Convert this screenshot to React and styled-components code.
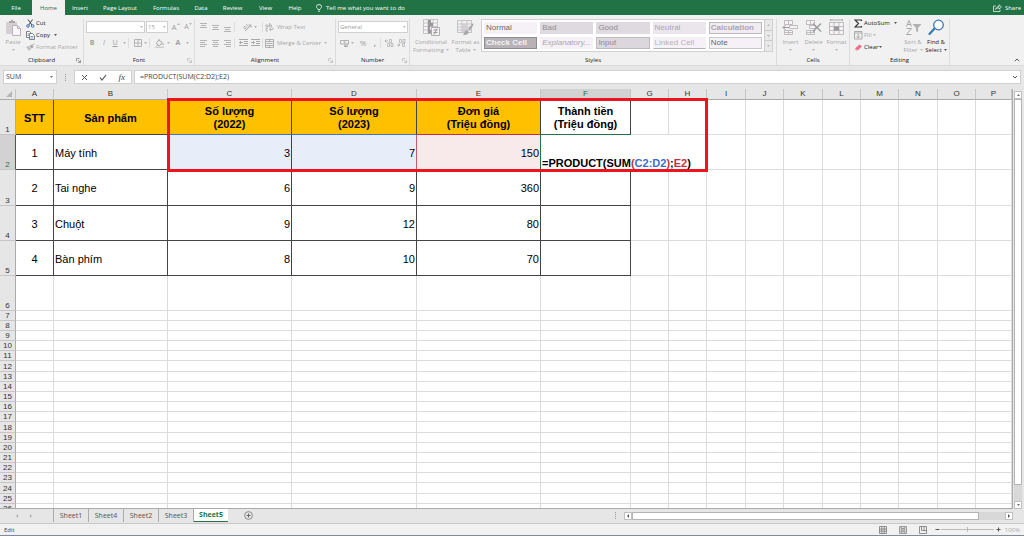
import React, { useState } from 'react';
import styled, { createGlobalStyle, css } from 'styled-components';

const menu = [
    { name: 'File', width: 32 },
    { name: 'Home', width: 33 },
    { name: 'Insert', width: 30 },
    { name: 'Page Layout', width: 50 },
    { name: 'Formulas', width: 42 },
    { name: 'Data', width: 28 },
    { name: 'Review', width: 35 },
    { name: 'View', width: 31 },
    { name: 'Help', width: 28 },
];

const cellStyles = [
    { name: 'Normal', kind: 'normal' },
    { name: 'Bad', kind: 'bad' },
    { name: 'Good', kind: 'bad' },
    { name: 'Neutral', kind: 'neutral' },
    { name: 'Calculation', kind: 'calc' },
    { name: 'Check Cell', kind: 'check' },
    { name: 'Explanatory...', kind: 'explain' },
    { name: 'Input', kind: 'input' },
    { name: 'Linked Cell', kind: 'linked' },
    { name: 'Note', kind: 'note' },
];

const columns = [
    ['A', 38], ['B', 114], ['C', 124], ['D', 125], ['E', 124], ['F', 90],
    ['G', 38], ['H', 38], ['I', 39], ['J', 38], ['K', 39], ['L', 38],
    ['M', 38], ['N', 39], ['O', 38], ['P', null],
];

const products = [
    { row: 2, stt: 1, name: 'Máy tính', y2022: 3, y2023: 7, price: 150 },
    { row: 3, stt: 2, name: 'Tai nghe', y2022: 6, y2023: 9, price: 360 },
    { row: 4, stt: 3, name: 'Chuột', y2022: 9, y2023: 12, price: 80 },
    { row: 5, stt: 4, name: 'Bàn phím', y2022: 8, y2023: 10, price: 70 },
];

const emptyRows = Array.from({ length: 21 }, (_, i) => i + 6);
const sheets = ['Sheet1', 'Sheet4', 'Sheet2', 'Sheet3', 'Sheet5'];

const rowHeight = (n) => {
    if (n === 3) return 36;
    if (n <= 6) return 35;
    return n % 6 === 0 ? 11 : 10;
};

const Caret = ({ up }) => (
    <CaretSvg viewBox="0 0 4 2"><path d={up ? 'M0 2L2 0L4 2Z' : 'M0 0L2 2L4 0Z'} fill="currentColor" /></CaretSvg>
);

const AlignIcon = ({ lines, top = 1 }) => (
    <Icon $w={9} $h={9} viewBox="0 0 9 9">
        {lines.map(([x, w], i) => <rect key={i} x={x} y={top + i * 2} width={w} height="1" fill="#b4b4b4" />)}
    </Icon>
);

function Clipboard() {
    return (
        <Group $w={84}>
            <Body>
                <BigButton $w={22}>
                    <Icon $w={17} $h={17} viewBox="0 0 17 17">
                        <path d="M1 3h11v12H1z" fill="#d3cfd3" />
                        <path d="M4 2h2l.5-1.500h1L8 2h2v2H4z" fill="#a9a5a9" />
                        <path d="M7.500 6.500h5l3 3v7h-8z" fill="#fbf6fb" stroke="#b8b4b8" />
                        <path d="M12.500 6.500v3h3" fill="none" stroke="#b8b4b8" />
                    </Icon>
                    <span>Paste</span>
                    <Caret />
                </BigButton>
                <Stack>
                    <SmallButton $on>
                        <Icon $w={9} $h={9} viewBox="0 0 9 9">
                            <path d="M2 .5L6 6M6.500 .5L2.800 6" stroke="#444" fill="none" />
                            <circle cx="2" cy="7" r="1.300" fill="none" stroke="#3c78b4" />
                            <circle cx="6.700" cy="7" r="1.300" fill="none" stroke="#3c78b4" />
                        </Icon>
                        Cut
                    </SmallButton>
                    <SmallButton $on>
                        <Icon $w={9} $h={9} viewBox="0 0 9 9">
                            <path d="M.5 .5h3l1.500 1.500v4.500H.5z" fill="#fff" stroke="#666" strokeWidth=".8" />
                            <path d="M3.500 2.500h3L8.500 4.500v4h-5z" fill="#fff" stroke="#666" strokeWidth=".8" />
                            <path d="M4.500 5.500h3M4.500 7h3M1.500 3h1.500M1.500 4.500h1.500" stroke="#3c78b4" strokeWidth=".7" />
                        </Icon>
                        Copy <Gap /><Caret />
                    </SmallButton>
                    <SmallButton>
                        <Icon $w={9} $h={9} viewBox="0 0 9 9">
                            <path d="M0 4l3-1 2.500 2.500L3 8z" fill="#c4c0c4" />
                            <path d="M4 3l1.500-1L7 3.500 6 5zM6 2.500L8.500 .5" stroke="#aaa" fill="#aaa" />
                        </Icon>
                        Format Painter
                    </SmallButton>
                </Stack>
            </Body>
            <Foot>Clipboard<Launcher on /></Foot>
        </Group>
    );
}

function Launcher({ on }) {
    return (
        <LaunchButton aria-label="More options" $on={on}>
            <Icon $w={5} $h={5} viewBox="0 0 5 5">
                <path d="M.5 3.500v-3h3M2 2l2.500 2.500M4.500 2v2.500H2" fill="none" stroke="currentColor" strokeWidth=".7" />
            </Icon>
        </LaunchButton>
    );
}

function FontGroup() {
    return (
        <Group $w={111}>
            <Body $rows>
                <Tools>
                    <Combo $w={59}><input aria-label="Font" defaultValue="" /><Caret /></Combo>
                    <Combo $w={22}><input aria-label="Font size" defaultValue="15" /><Caret /></Combo>
                    <Tool $w={13} $size={8}>A<Raise><Caret up /></Raise></Tool>
                    <Tool $w={12} $size={7}>A<Raise><Caret /></Raise></Tool>
                </Tools>
                <Tools>
                    <Tool $w={12}><b>B</b></Tool>
                    <Tool $w={12}><i>I</i></Tool>
                    <Tool $w={10}><u>U</u></Tool>
                    <Tool $w={8}><Caret /></Tool>
                    <Split />
                    <Tool $w={18}>
                        <Icon $w={8} $h={8} viewBox="0 0 8 8"><path d="M.5 .5h7v7h-7zM4 .5v7M.5 4h7" fill="none" stroke="#b5b5b5" /></Icon>
                        <Caret />
                    </Tool>
                    <Split />
                    <Tool $w={21}>
                        <Icon $w={10} $h={9} viewBox="0 0 10 9">
                            <path d="M1.500 3.500L4 1l3.500 3-3 2.500h-2zM4 1V0" fill="#eee" stroke="#a8a8a8" />
                            <path d="M8 4l1.200 2H7.500z" fill="#a8a8a8" /><path d="M0 7.500h9v1.500H0z" fill="#d0cdd0" />
                        </Icon>
                        <Caret />
                    </Tool>
                    <Tool $w={19}><b>A</b><Gap /><Caret /></Tool>
                </Tools>
            </Body>
            <Foot>Font<Launcher /></Foot>
        </Group>
    );
}

function Alignment() {
    return (
        <Group $w={141}>
            <Body $rows>
                <Tools>
                    <Tool $w={12}><AlignIcon top={0} lines={[[1, 7], [2, 5], [1, 7]]} /></Tool>
                    <Tool $w={12}><AlignIcon top={2} lines={[[1, 7], [2, 5], [1, 7]]} /></Tool>
                    <Tool $w={13}><AlignIcon top={4} lines={[[1, 7], [2, 5], [1, 7]]} /></Tool>
                    <Split />
                    <Tool $w={25}>
                        <Icon $w={9} $h={9} viewBox="0 0 9 9">
                            <path d="M2 8L8 2M8 2H5.500M8 2v2.500" fill="none" stroke="#a8a8a8" />
                            <circle cx="2" cy="4.500" r="1.200" fill="none" stroke="#a8a8a8" strokeWidth=".8" />
                            <path d="M3.200 1l2 2.500" stroke="#a8a8a8" strokeWidth=".8" />
                        </Icon>
                        <Caret />
                    </Tool>
                    <Split />
                    <SmallButton $gap={3}>
                        <Icon $w={9} $h={9} viewBox="0 0 9 9">
                            <path d="M4.500 0v4M1 2h2v2H1zM4.500 2h2v2h-2M3 5.500H1v2.500h2M4.500 6.500H8V4.500M6 5L4.500 6.500 6 8" fill="none" stroke="#a8a8a8" strokeWidth=".8" />
                        </Icon>
                        Wrap Text
                    </SmallButton>
                </Tools>
                <Tools>
                    <Tool $w={12}><AlignIcon lines={[[1, 7], [1, 5], [1, 7], [1, 5]]} /></Tool>
                    <Tool $w={12}><AlignIcon lines={[[1, 7], [2, 5], [1, 7], [2, 5]]} /></Tool>
                    <Tool $w={13}><AlignIcon lines={[[1, 7], [3, 5], [1, 7], [3, 5]]} /></Tool>
                    <Split />
                    <Tool $w={12}>
                        <Icon $w={9} $h={8} viewBox="0 0 9 8"><path d="M0 .5h9M5 2.500h4M5 4.500h4M0 6.500h9M4 3.500H.5M2 2L.5 3.500 2 5" fill="none" stroke="#a8a8a8" /></Icon>
                    </Tool>
                    <Tool $w={13}>
                        <Icon $w={9} $h={8} viewBox="0 0 9 8"><path d="M0 .5h9M5 2.500h4M5 4.500h4M0 6.500h9M0 3.500h3.500M2 2l1.500 1.500L2 5" fill="none" stroke="#a8a8a8" /></Icon>
                    </Tool>
                    <Split />
                    <SmallButton $gap={3}>
                        <Icon $w={9} $h={9} viewBox="0 0 9 9">
                            <path d="M.5 .5h8v8h-8zM.5 2.500h8M.5 6.500h8M4.500 .5v2M4.500 6.500v2M1.500 4.500h6" fill="none" stroke="#aaa" strokeWidth=".9" />
                        </Icon>
                        Merge &amp; Center <Caret />
                    </SmallButton>
                </Tools>
            </Body>
            <Foot>Alignment<Launcher /></Foot>
        </Group>
    );
}

function NumberGroup() {
    return (
        <Group $w={74}>
            <Body $rows>
                <Tools>
                    <Combo $w={70}><input aria-label="Number format" defaultValue="General" /><Caret /></Combo>
                </Tools>
                <Tools>
                    <Tool $w={18}>
                        <Icon $w={9} $h={9} viewBox="0 0 9 9">
                            <path d="M.5 1.500h8v3.500h-8z" fill="none" stroke="#b0b0b0" /><circle cx="4.500" cy="3.200" r="1" fill="#b0b0b0" />
                            <path d="M4 6h4M4 7.500h4" stroke="#a8a8a8" />
                        </Icon>
                        <Caret />
                    </Tool>
                    <Tool $w={14} $size={8}>%</Tool>
                    <Tool $w={10} $size={8}><b>,</b></Tool>
                    <Gap />
                    <Split />
                    <Tool $w={12}>
                        <Icon $w={9} $h={8} viewBox="0 0 9 8"><path d="M0 2h3M1.500 .5L0 2l1.500 1.500" fill="none" stroke="#a8a8a8" strokeWidth=".8" /><path d="M4.500 3.500v-3h2v3zM2.500 7.500v-3h2v3zM6 7.500v-3h2v3z" fill="none" stroke="#aaa" strokeWidth=".7" /></Icon>
                    </Tool>
                    <Tool $w={12}>
                        <Icon $w={9} $h={8} viewBox="0 0 9 8"><path d="M0 6h3M1.500 4.500L3 6 1.500 7.500" fill="none" stroke="#a8a8a8" strokeWidth=".8" /><path d="M2.500 3.500v-3h2v3zM6 3.500v-3h2v3zM5.500 7.500v-3h2v3z" fill="none" stroke="#aaa" strokeWidth=".7" /></Icon>
                    </Tool>
                </Tools>
            </Body>
            <Foot>Number<Launcher /></Foot>
        </Group>
    );
}

function Styles() {
    return (
        <Group $w={367}>
            <Body>
                <BigButton $w={38}>
                    <Icon $w={17} $h={17} viewBox="0 0 17 17">
                        <path d="M.5 .5h14v14H.5zM.5 4h14M.5 7.500h14M.5 11h14M5 .5v14M10 .5v14" fill="#f6f2f6" stroke="#c4c4c4" />
                        <path d="M5 1h3v3H5zM5 4h5v3.500H5zM5 7.500h2v3.500H5zM5 11h4v3.500H5z" fill="#999" />
                        <path d="M8.500 8.500h8v8h-8z" fill="#f4f1f4" stroke="#b0b0b0" />
                        <path d="M10.500 11h4M10.500 13.500h4M14 9.500l-3 6" stroke="#999" fill="none" />
                    </Icon>
                    <span>Conditional</span>
                    <Row>Formatting <Caret /></Row>
                </BigButton>
                <BigButton $w={31}>
                    <Icon $w={17} $h={17} viewBox="0 0 17 17">
                        <path d="M.5 1.500h14v12H.5zM.5 5h14M.5 8h14M.5 11h14M5 1.500v12M10 1.500v12" fill="#f4f0f4" stroke="#c4c4c4" />
                        <path d="M5 5h5v8H5z" fill="#d2ced2" />
                        <path d="M16 4l-5 6 1.500 1.500L16.500 6zM6 16c1-1 1-4 4-5l2 2c-1 3-4 3-6 3z" fill="#a8a8a8" />
                    </Icon>
                    <span>Format as</span>
                    <Row>Table <Caret /></Row>
                </BigButton>
                <Gallery>
                    <GalleryGrid>
                        {cellStyles.map((s) => <StyleTile key={s.name} $kind={s.kind}>{s.name}</StyleTile>)}
                    </GalleryGrid>
                    <GalleryScroll>
                        <button aria-label="Previous styles"><Caret up /></button>
                        <button aria-label="Next styles"><Caret /></button>
                        <button aria-label="More styles"><Caret /></button>
                    </GalleryScroll>
                </Gallery>
            </Body>
            <Foot>Styles</Foot>
        </Group>
    );
}

function Cells() {
    return (
        <Group $w={73}>
            <Body>
                <BigButton $w={23}>
                    <Icon $w={17} $h={17} viewBox="0 0 17 17">
                        <path d="M2.500 1.500h8v4h-8zM6.500 1.500v4M2.500 11.500h8v4h-8zM6.500 11.500v4M2.500 13.500h8M7.500 6.500h8v3h-8z" fill="#f6f2f6" stroke="#bfbcbf" />
                        <path d="M7 8.500H1M3.500 6L1 8.500 3.500 11" fill="none" stroke="#999" />
                    </Icon>
                    <span>Insert</span>
                    <Caret />
                </BigButton>
                <BigButton $w={23}>
                    <Icon $w={17} $h={17} viewBox="0 0 17 17">
                        <path d="M1.500 1.500h8v4h-8zM5.500 1.500v4M1.500 11.500h8v4h-8zM5.500 11.500v4M1.500 13.500h8M4.500 6.500h6v3h-6z" fill="#f6f2f6" stroke="#bfbcbf" />
                        <path d="M8 4.500l8 8M16 4.500l-8 8" fill="none" stroke="#999" strokeWidth="1.300" />
                    </Icon>
                    <span>Delete</span>
                    <Caret />
                </BigButton>
                <BigButton $w={23}>
                    <Icon $w={17} $h={17} viewBox="0 0 17 17">
                        <path d="M1.500 3.500h14v12h-14zM1.500 7.500h14M1.500 11.500h14M6 3.500v12M11 3.500v12" fill="#f6f2f6" stroke="#bfbcbf" />
                        <path d="M6 7.500h5v4H6z" fill="#999" />
                        <path d="M2.500 0v2M14.500 0v2M2.500 1h12" stroke="#aaa" />
                    </Icon>
                    <span>Format</span>
                    <Caret />
                </BigButton>
            </Body>
            <Foot>Cells</Foot>
        </Group>
    );
}

function Editing() {
    return (
        <Group $w={100}>
            <Body>
                <Stack>
                    <SmallButton $on>
                        <Icon $w={9} $h={9} viewBox="0 0 9 9"><path d="M7.500 2V1H1l3.500 3.500L1 8h6.500V7" fill="none" stroke="#333" strokeWidth="1.200" /></Icon>
                        AutoSum <Gap /><Caret />
                    </SmallButton>
                    <SmallButton>
                        <Icon $w={9} $h={9} viewBox="0 0 9 9"><path d="M.5 .5h7.500v7.500H.5zM.5 2h7.500M4.200 3v4M2.500 5.300L4.200 7 6 5.300" fill="none" stroke="#aaa" /></Icon>
                        Fill <Caret />
                    </SmallButton>
                    <SmallButton $on>
                        <Icon $w={9} $h={9} viewBox="0 0 9 9"><path d="M1 5.500L5.500 1.500 8 3.500 3.500 7.500z" fill="#e8708a" /><path d="M1 5.500l2.500 2L2.500 8 .5 6.500z" fill="#f4b8c4" /></Icon>
                        Clear <Caret />
                    </SmallButton>
                </Stack>
                <BigButton $w={24}>
                    <Icon $w={17} $h={17} viewBox="0 0 17 17">
                        <path d="M1.500 7.500L4 1.500l2.500 6M2.300 5.500h3.400M1.500 9.500h5l-5 6h5" fill="none" stroke="#a9a6a9" />
                        <path d="M7.500 5h9l-3.500 4v4.500l-2-1.500V9z" fill="#b4b1b4" />
                    </Icon>
                    <span>Sort &amp;</span>
                    <Row>Filter <Caret /></Row>
                </BigButton>
                <BigButton $w={22} $on>
                    <Icon $w={17} $h={17} viewBox="0 0 17 17">
                        <path d="M6.500 9.500L1.500 15" stroke="#3b77b5" strokeWidth="2.200" strokeLinecap="round" />
                        <circle cx="10.500" cy="6" r="4.800" fill="#fff" stroke="#3b77b5" strokeWidth="1.300" />
                    </Icon>
                    <span>Find &amp;</span>
                    <Row>Select <Caret /></Row>
                </BigButton>
            </Body>
            <Foot>Editing</Foot>
        </Group>
    );
}

function Sheet() {
    return (
        <Table>
            <colgroup>
                <Col $w={16} />
                {columns.map(([name, width]) => <Col key={name} $w={width} />)}
            </colgroup>
            <thead>
                <Line $h={11}>
                    <Corner aria-label="Select all">
                        <Icon $w={6} $h={6} viewBox="0 0 6 6"><path d="M6 0v6H0z" fill="#b4b4b4" /></Icon>
                    </Corner>
                    {columns.map(([name]) => <ColHead key={name} scope="col" $active={name === 'F'}>{name}</ColHead>)}
                </Line>
            </thead>
            <tbody>
                <Line $h={rowHeight(1)}>
                    <RowHead scope="row">1</RowHead>
                    <Title $gold>STT</Title>
                    <Title $gold>Sản phẩm</Title>
                    <Title $gold $edge="#4472c4">Số lượng<br />(2022)</Title>
                    <Title $gold $edge="#4472c4">Số lượng<br />(2023)</Title>
                    <Title $gold $edge="#c4303c">Đơn giá<br />(Triệu đồng)</Title>
                    <Title $edge="#217346">Thành tiền<br />(Triệu đồng)</Title>
                    {columns.slice(6).map(([name]) => <Cell key={name} />)}
                </Line>
                {products.map((p) => (
                    <Line key={p.row} $h={rowHeight(p.row)}>
                        <RowHead scope="row" $active={p.row === 2}>{p.row}</RowHead>
                        <Cell $boxed $align="center">{p.stt}</Cell>
                        <Cell $boxed $align="left">{p.name}</Cell>
                        <Cell $boxed $fill={p.row === 2 && '#e8eef9'}>{p.y2022}</Cell>
                        <Cell $boxed $fill={p.row === 2 && '#e8eef9'} $side={p.row === 2 && '#c4606a'}>{p.y2023}</Cell>
                        <Cell $boxed $fill={p.row === 2 && '#f8e9ea'} $side={p.row === 2 && '#217346'}>{p.price}</Cell>
                        {p.row === 2 ? (
                            <Editor colSpan={3}>
                                =PRODUCT(SUM<Ref $color="#c4303c">(</Ref><Ref $color="#3a6fc8">C2:D2</Ref><Ref $color="#c4303c">)</Ref>;<Ref $color="#c4303c">E2</Ref>)
                            </Editor>
                        ) : <Cell $boxed />}
                        {columns.slice(p.row === 2 ? 8 : 6).map(([name]) => <Cell key={name} />)}
                    </Line>
                ))}
                {emptyRows.map((n) => (
                    <Line key={n} $h={rowHeight(n)}>
                        <RowHead scope="row">{n}</RowHead>
                        {columns.map(([name]) => <Cell key={name} />)}
                    </Line>
                ))}
            </tbody>
        </Table>
    );
}

function App() {
    const [tab, setTab] = useState('Home');
    const [sheet, setSheet] = useState('Sheet5');
    const [formula, setFormula] = useState('=PRODUCT(SUM(C2:D2);E2)');
    return (
        <Window>
            <Global />
            <Menu>
                {menu.map((m) => (
                    <MenuTab key={m.name} $w={m.width} $active={m.name === tab} onClick={() => setTab(m.name)}>{m.name}</MenuTab>
                ))}
                <TellMe>
                    <Icon $w={6} $h={8} viewBox="0 0 6 8"><path d="M2 5.500C2 4.500 .5 4 .5 2.500a2.500 2 0 0 1 5 0C5.500 4 4 4.500 4 5.500zM2 7.200h2" fill="none" stroke="#fff" strokeWidth=".8" /></Icon>
                    Tell me what you want to do
                </TellMe>
                <Share>
                    <Icon $w={9} $h={8} viewBox="0 0 9 8"><path d="M3 2H.5v5.500h6.500V5.500M2.500 5.500C3 3.500 4.500 2.500 6 2.500V.8L8.500 3 6 5V3.800C4.500 3.800 3.500 4.300 2.500 5.500z" fill="none" stroke="#fff" strokeWidth=".7" /></Icon>
                    Share
                </Share>
            </Menu>
            <Ribbon>
                <Clipboard />
                <FontGroup />
                <Alignment />
                <NumberGroup />
                <Styles />
                <Cells />
                <Editing />
                <Collapse aria-label="Collapse the ribbon">
                    <Icon $w={6} $h={4} viewBox="0 0 6 4"><path d="M.8 3.200L3 1l2.200 2.200" fill="none" stroke="#555" /></Icon>
                </Collapse>
            </Ribbon>
            <FormulaBar>
                <NameBox><input aria-label="Name box" defaultValue="SUM" /><Caret /></NameBox>
                <Dots />
                <FormulaButtons>
                    <button aria-label="Cancel"><Icon $w={7} $h={7} viewBox="0 0 7 7"><path d="M1 1l5 5M6 1L1 6" stroke="#555" /></Icon></button>
                    <button aria-label="Enter"><Icon $w={8} $h={7} viewBox="0 0 8 7"><path d="M1 3.500L3 6l4-5" fill="none" stroke="#555" strokeWidth="1.200" /></Icon></button>
                    <button aria-label="Insert function"><Fx>fx</Fx></button>
                </FormulaButtons>
                <FormulaField>
                    <input aria-label="Formula" value={formula} onChange={(e) => setFormula(e.target.value)} />
                    <Icon $w={6} $h={4} viewBox="0 0 6 4"><path d="M1 1l2 2 2-2" fill="none" stroke="#555" /></Icon>
                </FormulaField>
            </FormulaBar>
            <Work>
                <Grid>
                    <Sheet />
                    <Highlight />
                </Grid>
                <VScroll>
                    <ScrollButton aria-label="Scroll up"><Caret up /></ScrollButton>
                    <VTrack><Thumb $size={96} /></VTrack>
                    <ScrollButton aria-label="Scroll down"><Caret /></ScrollButton>
                </VScroll>
            </Work>
            <SheetBar>
                <SheetNav>
                    <button aria-label="Previous sheet"><Icon $w={3} $h={4} viewBox="0 0 3 4"><path d="M3 0v4L1 2z" fill="#b0b0b0" /></Icon></button>
                    <button aria-label="Next sheet"><Icon $w={3} $h={4} viewBox="0 0 3 4"><path d="M0 0v4l2-2z" fill="#b0b0b0" /></Icon></button>
                </SheetNav>
                {sheets.map((s) => (
                    <SheetTab key={s} $active={s === sheet} onClick={() => setSheet(s)}>{s}</SheetTab>
                ))}
                <AddSheet aria-label="New sheet">
                    <Icon $w={9} $h={9} viewBox="0 0 9 9"><circle cx="4.500" cy="4.500" r="3.900" fill="none" stroke="#777" strokeWidth=".8" /><path d="M4.500 2.500v4M2.500 4.500h4" stroke="#666" /></Icon>
                </AddSheet>
                <Dots />
                <HScroll>
                    <ScrollButton aria-label="Scroll left"><Icon $w={2} $h={4} viewBox="0 0 2 4"><path d="M2 0v4L0 2z" fill="#555" /></Icon></ScrollButton>
                    <Track><Thumb $size={93} /></Track>
                    <ScrollButton aria-label="Scroll right"><Icon $w={2} $h={4} viewBox="0 0 2 4"><path d="M0 0v4l2-2z" fill="#555" /></Icon></ScrollButton>
                </HScroll>
            </SheetBar>
            <Status>
                <Mode>Edit</Mode>
                <ViewButton aria-label="Normal view"><Icon $w={8} $h={8} viewBox="0 0 8 8"><path d="M.5 .5h7v7h-7zM.5 3h7M.5 5.200h7M2.800 .5v7M5.200 .5v7" fill="none" stroke="#777" strokeWidth=".8" /></Icon></ViewButton>
                <ViewButton aria-label="Page layout view"><Icon $w={8} $h={8} viewBox="0 0 8 8"><path d="M.5 .5h7v7h-7zM2.300 1v6.500M5.700 1v6.500M3 2.500h2M3 4h2M3 5.500h2" fill="#ddd" stroke="#888" strokeWidth=".8" /></Icon></ViewButton>
                <ViewButton aria-label="Page break preview"><Icon $w={8} $h={8} viewBox="0 0 8 8"><path d="M.5 .5h7v7h-7zM2.500 .5v4h5M5 .5v4" fill="none" stroke="#777" strokeWidth=".8" /></Icon></ViewButton>
                <ZoomButton aria-label="Zoom out"><Icon $w={5} $h={5} viewBox="0 0 5 5"><path d="M.5 2.500h4" stroke="#555" /></Icon></ZoomButton>
                <ZoomRange type="range" aria-label="Zoom" defaultValue="50" />
                <ZoomButton aria-label="Zoom in"><Icon $w={5} $h={5} viewBox="0 0 5 5"><path d="M.5 2.500h4M2.500 .5v4" stroke="#555" /></Icon></ZoomButton>
                <Percent>100%</Percent>
            </Status>
        </Window>
    );
}

const Global = createGlobalStyle`
    * {
        box-sizing: border-box;
    }
    body {
        margin: 0;
    }
    button, input {
        font: inherit;
        color: inherit;
        padding: 0;
        margin: 0;
        border: 0;
        background: none;
        min-width: 0;
        outline: none;
    }
    button {
        display: flex;
        align-items: center;
        justify-content: center;
        white-space: nowrap;
    }
`;
const Window = styled.div`
    display: flex;
    flex-direction: column;
    height: 100vh;
    overflow: hidden;
    background: #e6e6e6;
    color: #444;
    font-family: "Open Sans", "Noto Sans", sans-serif;
    font-size: 6px;
    line-height: 8px;
`;
const Icon = styled.svg`
    display: block;
    flex: none;
    width: ${p => p.$w}px;
    height: ${p => p.$h}px;
`;
const CaretSvg = styled.svg`
    display: block;
    flex: none;
    width: 3px;
    height: 2px;
`;
const Gap = styled.span`
    width: 2px;
`;
const Row = styled.span`
    display: flex;
    align-items: center;
    gap: 2px;
`;
const Menu = styled.nav`
    display: flex;
    flex: none;
    height: 15px;
    padding-right: 3px;
    background: #217346;
    color: #fff;
`;
const MenuTab = styled.button`
    width: ${p => p.$w}px;
    ${p => p.$active && css`
        background: #f1f1f1;
        color: #217346;
    `}
`;
const TellMe = styled.button`
    gap: 4px;
    margin: 0 auto 0 7px;
`;
const Share = styled.button`
    gap: 3px;
`;
const Ribbon = styled.div`
    display: flex;
    flex: none;
    height: 51px;
    padding: 4px 0 0;
    background: #f1f1f1;
    border-bottom: 1px solid #dadada;
`;
const Group = styled.section`
    display: flex;
    flex-direction: column;
    flex: none;
    width: ${p => p.$w}px;
    border-right: 1px solid #dcdcdc;
`;
const Body = styled.div`
    display: flex;
    flex: 1;
    padding: 0 2px;
    ${p => p.$rows && css`
        flex-direction: column;
        gap: 4px;
        padding-top: 2px;
    `}
`;
const Foot = styled.div`
    display: flex;
    align-items: center;
    justify-content: center;
    position: relative;
    height: 10px;
    color: #222;
`;
const LaunchButton = styled.button`
    position: absolute;
    right: 2px;
    bottom: 2px;
    color: ${p => p.$on ? '#777' : '#b8b8b8'};
`;
const BigButton = styled.button`
    flex-direction: column;
    justify-content: flex-start;
    flex: none;
    width: ${p => p.$w}px;
    color: ${p => p.$on ? '#222' : '#a8a5a8'};
    & > svg + span {
        margin-top: 2px;
    }
    & > span + svg {
        margin-top: 3px;
    }
`;
const Stack = styled.div`
    display: flex;
    flex-direction: column;
    gap: 4px;
    flex: 1;
    padding-left: 2px;
`;
const SmallButton = styled.button`
    justify-content: flex-start;
    gap: ${p => p.$gap || 1}px;
    height: 8px;
    color: ${p => p.$on ? '#222' : '#a8a5a8'};
`;
const Tools = styled.div`
    display: flex;
    align-items: center;
    height: 12px;
    color: #a0a0a0;
`;
const Tool = styled.button`
    gap: 2px;
    flex: none;
    width: ${p => p.$w}px;
    height: 12px;
    font-size: ${p => p.$size || 7}px;
`;
const Raise = styled.span`
    align-self: flex-start;
    margin-left: -2px;
    padding-top: 2px;
`;
const Split = styled.span`
    flex: none;
    width: 1px;
    height: 10px;
    margin-right: 2px;
    background: #dedede;
`;
const Combo = styled.label`
    display: flex;
    align-items: center;
    flex: none;
    width: ${p => p.$w}px;
    height: 12px;
    padding: 0 1px;
    margin-right: 1px;
    background: #fff;
    border: 1px solid #d0d0d0;
    input {
        flex: 1;
        width: 100%;
    }
`;
const Gallery = styled.div`
    display: flex;
    flex: 1;
    height: 33px;
    margin-right: 1px;
    background: #fff;
    border: 1px solid #d0d0d0;
`;
const GalleryGrid = styled.div`
    display: grid;
    flex: 1;
    grid-template-columns: repeat(5, 1fr);
    grid-template-rows: 12px 12px;
    gap: 3px;
    padding: 2px;
    font-family: "Liberation Sans", Arial, sans-serif;
    font-size: 8px;
`;
const tileKinds = {
    normal: css`background: #f6f1f6; color: #666;`,
    bad: css`background: #dfdadf; color: #8f8b8f;`,
    neutral: css`background: #ebe6eb; color: #aaa6aa;`,
    calc: css`background: #f1ecf1; color: #aaa6aa; border-color: #bbb; font-weight: 700;`,
    check: css`background: #b6b2b6; color: #f4f4f4; border-color: #8d8d8d; font-weight: 700;`,
    explain: css`background: #f6f1f6; color: #aaa6aa; font-style: italic;`,
    input: css`background: #dcd7dc; color: #8f8b8f; border-color: #bbb;`,
    linked: css`background: #f6f1f6; color: #b5b1b5; border-bottom-color: #b5b1b5;`,
    note: css`background: #f6f1f6; color: #666; border-color: #c8c8c8;`,
};
const StyleTile = styled.button`
    justify-content: flex-start;
    padding-left: 1px;
    border: 1px solid transparent;
    overflow: hidden;
    ${p => tileKinds[p.$kind]}
`;
const GalleryScroll = styled.div`
    display: flex;
    flex-direction: column;
    width: 8px;
    background: #e9e9e9;
    color: #aaa;
    button {
        flex: 1;
        border-left: 1px solid #ccc;
        border-bottom: 1px solid #ccc;
    }
    button:last-child {
        border-bottom: 0;
    }
`;
const Collapse = styled.button`
    align-self: flex-end;
    margin-left: auto;
    padding: 3px 4px;
`;
const FormulaBar = styled.div`
    display: flex;
    flex: none;
    height: 23px;
    padding: 4px 3px 5px;
    font-size: 7px;
`;
const NameBox = styled.label`
    display: flex;
    align-items: center;
    width: 54px;
    padding: 0 3px 0 2px;
    background: #fff;
    border: 1px solid #d0d0d0;
    input {
        flex: 1;
        width: 100%;
    }
`;
const Dots = styled.span`
    align-self: center;
    width: 1px;
    height: 7px;
    margin: 0 8px;
    border-left: 1px dotted #999;
`;
const FormulaButtons = styled.div`
    display: flex;
    width: 58px;
    margin-right: 2px;
    background: #fff;
    border: 1px solid #d0d0d0;
    button {
        flex: 1;
    }
`;
const Fx = styled.i`
    font-family: "Liberation Serif", serif;
    font-size: 9px;
`;
const FormulaField = styled.div`
    display: flex;
    align-items: center;
    flex: 1;
    padding: 0 2px 0 5px;
    background: #fff;
    border: 1px solid #d0d0d0;
    input {
        flex: 1;
    }
`;
const Work = styled.div`
    display: flex;
    flex: 1;
    min-height: 0;
`;
const Grid = styled.div`
    position: relative;
    flex: 1;
    overflow: hidden;
    border-right: 1px solid #ababab;
    border-bottom: 1px solid #ababab;
`;
const Table = styled.table`
    width: 100%;
    table-layout: fixed;
    border-collapse: separate;
    border-spacing: 0;
    background: #fff;
    color: #000;
    font-family: "Liberation Sans", Arial, sans-serif;
    font-size: 11px;
    line-height: 13px;
`;
const Col = styled.col`
    width: ${p => p.$w ? `${p.$w}px` : 'auto'};
`;
const Line = styled.tr`
    height: ${p => p.$h}px;
`;
const Corner = styled.td`
    padding: 0 2px 0 6px;
    background: #e6e6e6;
    border-right: 1px solid #c6c6c6;
    border-bottom: 1px solid #ababab;
`;
const ColHead = styled.th`
    padding: 0;
    background: ${p => p.$active ? '#d2d2d2' : '#e6e6e6'};
    color: ${p => p.$active ? '#217346' : '#333'};
    border-right: 1px solid #c6c6c6;
    border-bottom: 1px solid #ababab;
    font-size: 8px;
    font-weight: 400;
    line-height: 10px;
`;
const RowHead = styled.th`
    padding: 0;
    vertical-align: bottom;
    background: ${p => p.$active ? '#d2d2d2' : '#e6e6e6'};
    color: ${p => p.$active ? '#217346' : '#333'};
    border-right: 1px solid ${p => p.$active ? '#217346' : '#ababab'};
    border-bottom: 1px solid #c6c6c6;
    font-size: 8px;
    font-weight: 400;
    line-height: 9px;
`;
const Cell = styled.td`
    padding: 2px 1px 0;
    text-align: ${p => p.$align || 'right'};
    background: ${p => p.$fill || '#fff'};
    border-right: 1px solid ${p => p.$side || (p.$boxed ? '#444' : '#dcdcdc')};
    border-bottom: 1px solid ${p => p.$boxed ? '#444' : '#dcdcdc'};
`;
const Title = styled.th`
    padding: 2px 0 0;
    background: ${p => p.$gold ? '#ffc000' : '#fff'};
    border-right: 1px solid #444;
    border-bottom: 1px solid ${p => p.$edge || '#444'};
`;
const Editor = styled.td`
    padding: 0 1px;
    vertical-align: bottom;
    font-weight: 700;
    white-space: nowrap;
    border-right: 1px solid #dcdcdc;
`;
const Ref = styled.span`
    color: ${p => p.$color};
`;
const Highlight = styled.div`
    position: absolute;
    left: 167px;
    top: 9px;
    width: 541px;
    height: 74px;
    border: 3px solid #ed1420;
    pointer-events: none;
`;
const VScroll = styled.div`
    display: flex;
    flex-direction: column;
    width: 11px;
    padding: 2px 1px 0;
`;
const ScrollButton = styled.button`
    flex: none;
    width: 8px;
    height: 8px;
    background: #fff;
    border: 1px solid #c0c0c0;
`;
const Thumb = styled.div`
    flex: none;
    flex-basis: ${p => p.$size}%;
    background: #fff;
    border: 1px solid #b4b4b4;
`;
const Track = styled.div`
    display: flex;
    flex: 1;
    height: 8px;
    background: #d8d8d8;
`;
const VTrack = styled.div`
    display: flex;
    flex-direction: column;
    flex: 1;
    width: 8px;
    background: #d8d8d8;
`;
const SheetBar = styled.div`
    display: flex;
    flex: none;
    height: 15px;
    padding-bottom: 1px;
    border-bottom: 1px solid #c8c8c8;
    color: #555;
    font-size: 7px;
`;
const SheetNav = styled.div`
    display: flex;
    align-items: center;
    justify-content: center;
    gap: 12px;
    width: 54px;
    padding-right: 6px;
    border-right: 1px solid #ababab;
`;
const SheetTab = styled.button`
    width: 35px;
    border-right: 1px solid #ababab;
    ${p => p.$active && css`
        width: 34px;
        background: #fff;
        color: #217346;
        font-weight: 700;
        border-right: 0;
        border-bottom: 1px solid #217346;
    `}
`;
const AddSheet = styled.button`
    margin: 0 auto 0 16px;
`;
const HScroll = styled.div`
    display: flex;
    align-items: center;
    width: 38%;
    margin-right: 11px;
`;
const Status = styled.footer`
    display: flex;
    align-items: center;
    flex: none;
    height: 12px;
    padding: 0 4px;
    background: #f1f1f1;
    border-bottom: 1px solid #7d8c96;
`;
const Mode = styled.span`
    margin-right: auto;
`;
const ViewButton = styled.button`
    width: 20px;
`;
const ZoomButton = styled.button`
    width: 8px;
`;
const ZoomRange = styled.input`
    appearance: none;
    width: 53px;
    height: 7px;
    background: linear-gradient(#bbb, #bbb) center / 100% 1px no-repeat;
    &::-webkit-slider-thumb {
        appearance: none;
        width: 1px;
        height: 5px;
        background: #bbb;
    }
`;
const Percent = styled.span`
    width: 18px;
    color: #aaa;
    text-align: right;
`;
export default App;
